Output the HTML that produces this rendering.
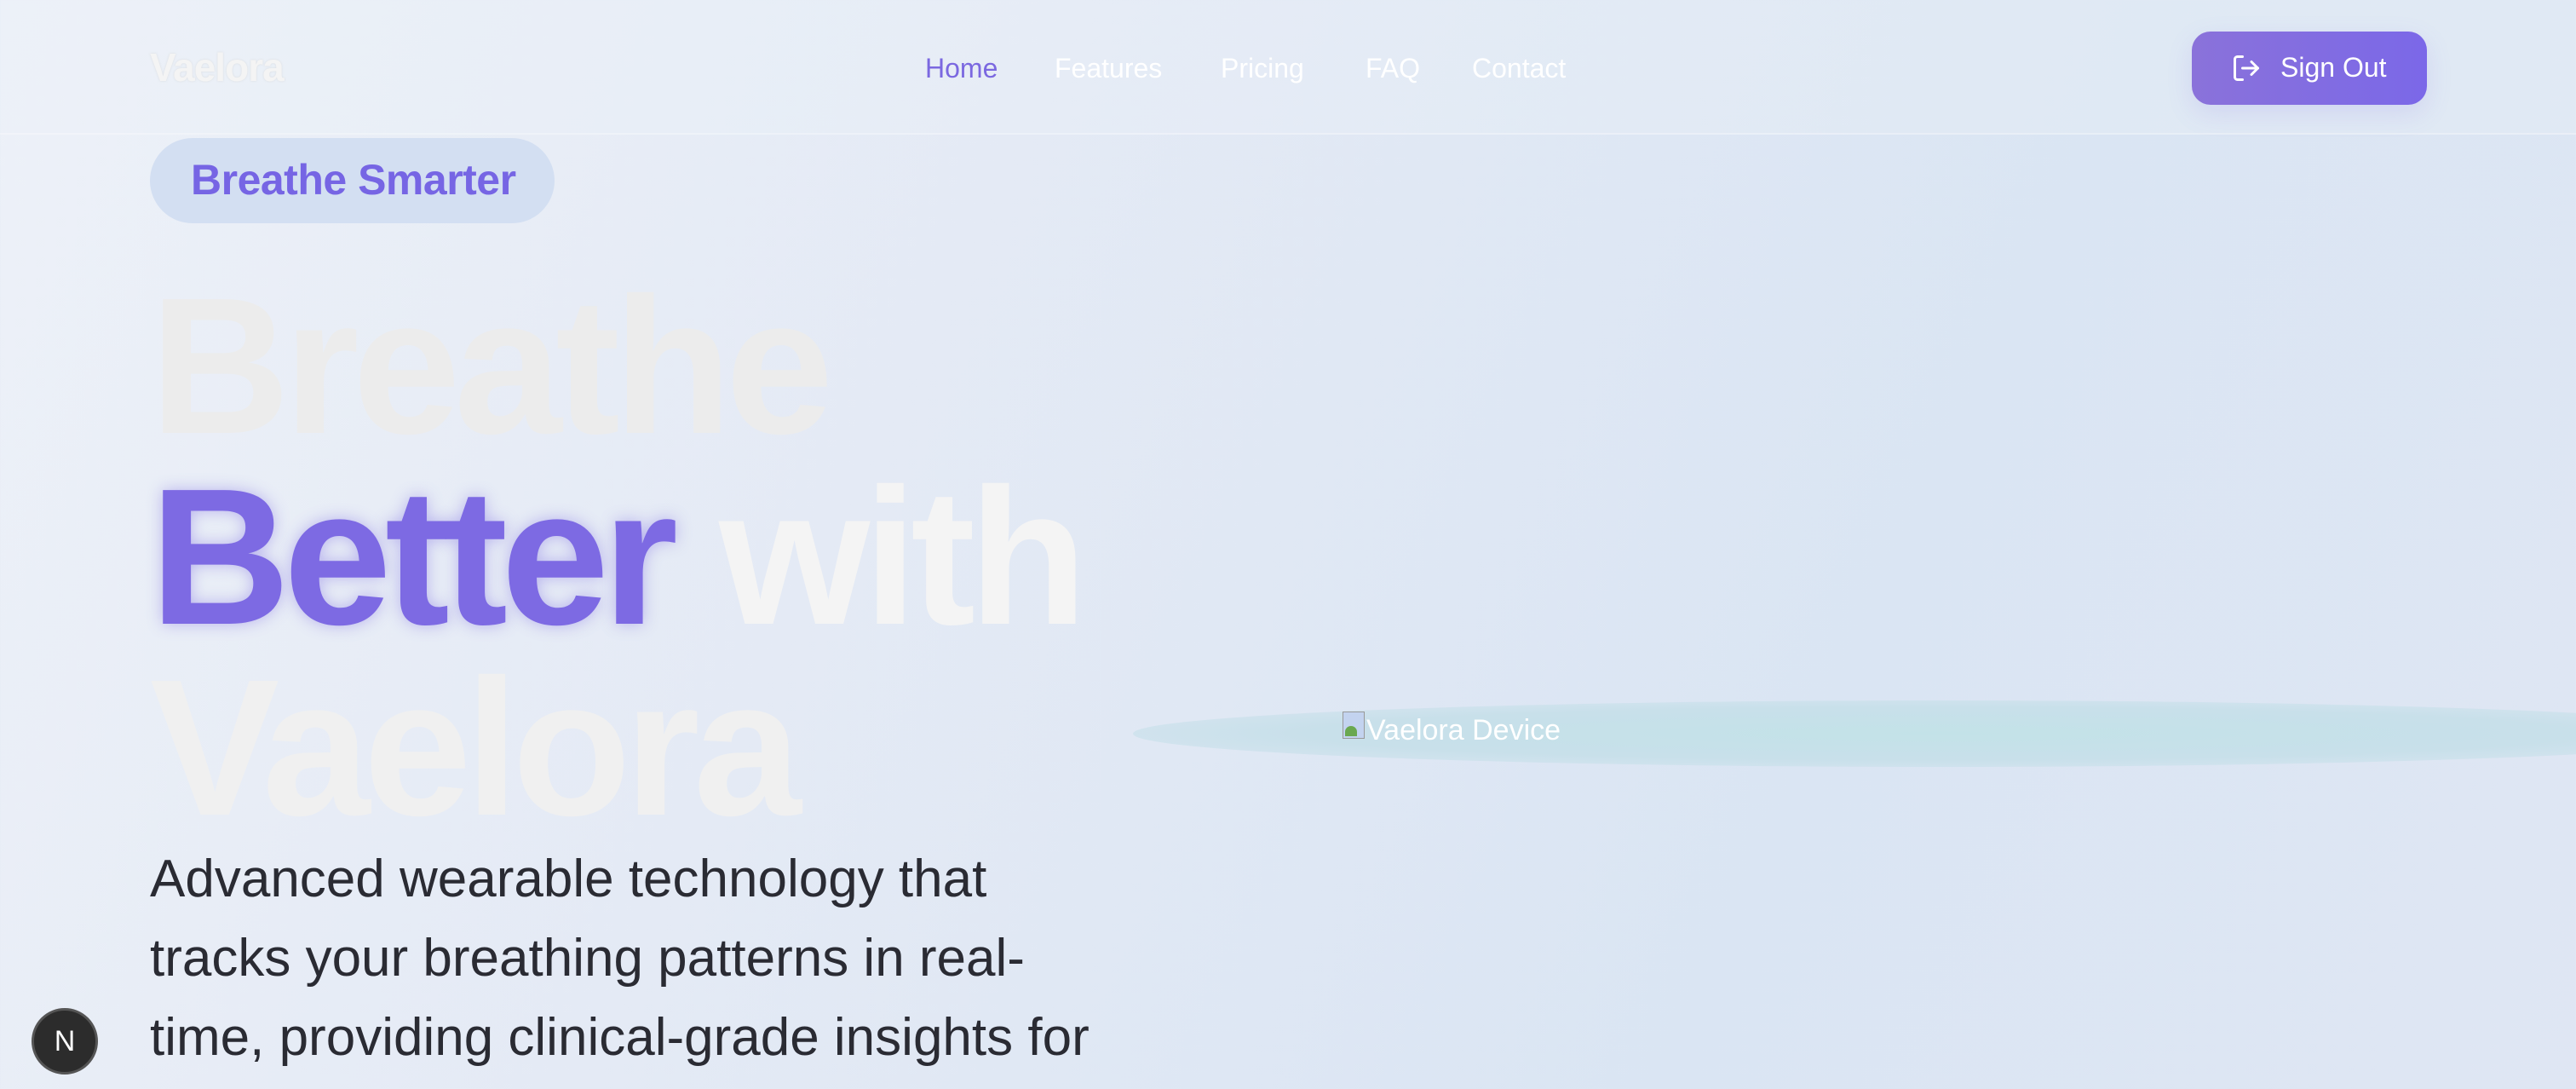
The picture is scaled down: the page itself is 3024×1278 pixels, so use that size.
<!DOCTYPE html>
<html><head><meta charset="utf-8"><style>
*{margin:0;padding:0;box-sizing:border-box}
html,body{width:3024px;height:1278px;overflow:hidden}
body{font-family:"Liberation Sans",sans-serif;background:linear-gradient(115deg,#edf1f8 0%,#e4eaf5 35%,#dae5f3 70%,#dfe6f3 100%);position:relative}
.hdr{position:absolute;left:0;top:0;width:3024px;height:158px;border-bottom:2px solid rgba(255,255,255,0.3);background:rgba(236,241,249,0.3)}
.logo{position:absolute;left:176px;top:52px;font-size:46px;font-weight:bold;color:#f4f4f4;letter-spacing:-1px;text-shadow:0 0 2px rgba(200,200,200,0.5)}
.nav{position:absolute;top:62px;font-size:32px;color:#fff}
.btn{position:absolute;left:2573px;top:37px;width:276px;height:86px;border-radius:22px;background:linear-gradient(90deg,#8a72da,#7b68e8);box-shadow:0 10px 30px rgba(123,104,232,0.15);color:#fff;font-size:32px}
.btn span{position:absolute;left:104px;top:24px}
.badge{position:absolute;left:176px;top:162px;width:475px;height:100px;background:#d3dff2;border-radius:50px}
.badge span{position:absolute;left:48px;top:20px;font-size:50px;font-weight:bold;color:#7665e4;letter-spacing:-0.5px}
h1{position:absolute;left:176px;top:318px;font-size:228px;line-height:224px;font-weight:bold;letter-spacing:-0.034em}
.g{color:#ececec}
.p{color:#7d6ae3;text-shadow:0 0 18px rgba(125,106,227,0.45)}
.w{color:#f4f4f4}
p{position:absolute;left:176px;top:985px;font-size:62px;line-height:93px;color:#2a2b33}
.ell{position:absolute;left:1330px;top:822px;width:1900px;height:78px;border-radius:50%;background:radial-gradient(ellipse at center,#c3e2e8 0%,#c8e0ea 55%,rgba(200,224,234,0) 100%)}
.img{position:absolute;left:1604px;top:838px;font-size:34px;color:#fff}
.ico{position:absolute;left:1576px;top:835px;width:26px;height:32px;background:#c3d3ef;border:1px solid #999}
.ico:after{content:"";position:absolute;left:2px;bottom:2px;width:14px;height:12px;background:#6aa84f;border-radius:10px 10px 0 0}
.n{position:absolute;left:37px;top:1183px;width:78px;height:78px;border-radius:50%;background:#2c2c2c;border:3px solid #555;color:#fff;font-size:34px;text-align:center;line-height:72px}
</style></head><body>
<div class="hdr">
<div class="logo">Vaelora</div>
<div class="nav" style="left:1086px;color:#7b68e0">Home</div>
<div class="nav" style="left:1238px">Features</div>
<div class="nav" style="left:1433px">Pricing</div>
<div class="nav" style="left:1603px">FAQ</div>
<div class="nav" style="left:1728px">Contact</div>
<div class="btn"><svg style="position:absolute;left:46px;top:25px" width="36" height="36" viewBox="0 0 24 24" fill="none" stroke="#fff" stroke-width="2" stroke-linecap="round" stroke-linejoin="round"><path d="M9 21H5a2 2 0 0 1-2-2V5a2 2 0 0 1 2-2h4"/><path d="M16 17l5-5-5-5"/><path d="M21 12H9"/></svg><span>Sign Out</span></div>
</div>
<div class="badge"><span>Breathe Smarter</span></div>
<h1><span class="g">Breathe</span><br><span class="p">Better</span> <span class="w">with</span><br><span class="g" style="color:#f0f0f0">Vaelora</span></h1>
<p>Advanced wearable technology that<br>tracks your breathing patterns in real-<br>time, providing clinical-grade insights for</p>
<div class="ell"></div>
<div class="ico"></div>
<div class="img">Vaelora Device</div>
<div class="n">N</div>
</body></html>
